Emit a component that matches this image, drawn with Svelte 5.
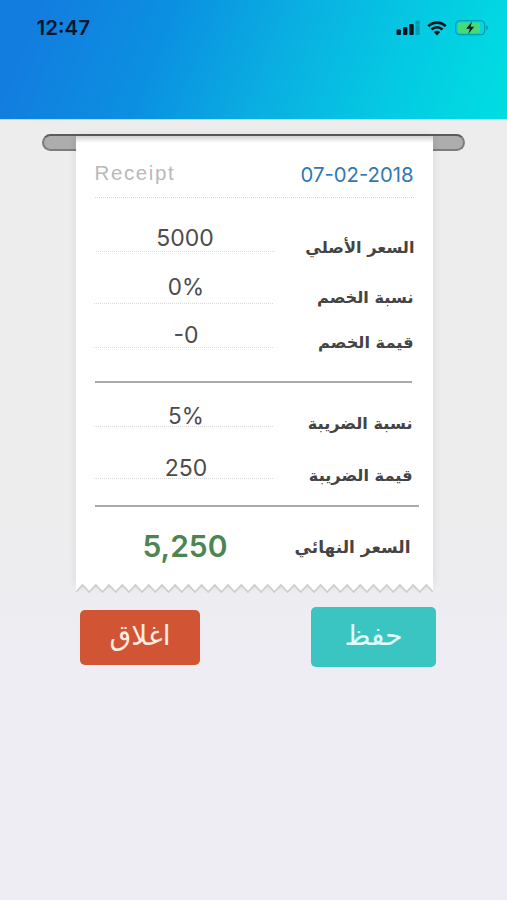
<script lang="ts">
	const time = '12:47';
	const date = '07-02-2018';

	const priceRows = [
		{ id: 'price', label: 'السعر الأصلي', value: '5000' },
		{ id: 'discount-rate', label: 'نسبة الخصم', value: '0%' },
		{ id: 'discount', label: 'قيمة الخصم', value: '-0' }
	];

	const taxRows = [
		{ id: 'tax-rate', label: 'نسبة الضريبة', value: '5%' },
		{ id: 'tax', label: 'قيمة الضريبة', value: '250' }
	];

	// torn edge of the paper
	const teeth = 27;
	const toothWidth = 357 / teeth;
	let edge = 'M0 8';
	for (let i = 0; i < teeth; i++) {
		edge += ` L${(i + 0.5) * toothWidth} 1 L${(i + 1) * toothWidth} 8`;
	}
</script>

{#snippet row(item: { id: string; label: string; value: string })}
	<div class="row {item.id}">
		<div class="value">{item.value}</div>
		<div class="label" dir="rtl">{item.label}</div>
	</div>
{/snippet}

<div class="screen">
	<header>
		<span class="time">{time}</span>
		<div class="status">
			<svg class="signal" viewBox="0 0 24 16">
				<rect x="0.5" y="9.5" width="4.4" height="5.5" rx="1" />
				<rect x="7" y="7" width="4.4" height="8" rx="1" />
				<rect x="13.3" y="4" width="4.4" height="11" rx="1" />
				<rect x="19.5" y="0.5" width="4.2" height="14.5" rx="1" opacity="0.25" />
			</svg>
			<svg class="wifi" viewBox="0 0 20 15">
				<path d="M1.3 5.2 C6.2 0.4 13.8 0.4 18.7 5.2" />
				<path d="M4.5 8.5 C7.6 5.5 12.4 5.5 15.5 8.5" />
				<path class="dot" d="M6.8 11.1 Q10 8.6 13.2 11.1 L10 14.4Z" />
			</svg>
			<svg class="battery" viewBox="0 0 34 16">
				<rect x="0.7" y="0.7" width="29" height="14" rx="4" fill="none" stroke="#0b93a6" stroke-width="1.1" />
				<rect x="2.6" y="2.5" width="22.5" height="10.4" rx="2.4" fill="#46da78" />
				<path d="M31.3 5 Q34.5 7.7 31.3 10.4Z" fill="#0b93a6" />
				<path d="M17 1.6 L11.2 8.7 H14.8 L13.3 14 L19.2 6.8 H15.6Z" fill="#071d24" />
			</svg>
		</div>
	</header>

	<main>
		<div class="slot">
			<section class="paper">
				<div class="top">
					<span class="title">Receipt</span>
					<span class="date">{date}</span>
				</div>

				{#each priceRows as item}
					{@render row(item)}
				{/each}
				<hr />
				{#each taxRows as item}
					{@render row(item)}
				{/each}
				<hr class="wide" />

				<div class="total">
					<div class="amount">5,250</div>
					<div class="label" dir="rtl">السعر النهائي</div>
				</div>

				<svg class="edge" viewBox="0 0 357 11">
					<path class="fill" d="{edge} V0 H0Z" />
					<path class="tear" d={edge} />
				</svg>
			</section>
		</div>

		<div class="actions">
			<button class="close">اغلاق</button>
			<button class="save">حفظ</button>
		</div>
	</main>
</div>

<style>
	:global(body) {
		margin: 0;
		background: #eeedf2;
	}

	.screen {
		min-height: 900px;
		overflow: hidden;
		background: linear-gradient(180deg, #ededed 120px, #ededef 560px, #eeedf3 640px);
		font-family: Inter, 'DejaVu Sans', sans-serif;
	}

	header {
		box-sizing: border-box;
		height: 120px;
		padding: 18px 19px 0 36.5px;
		display: flex;
		justify-content: space-between;
		align-items: flex-start;
		background: linear-gradient(112deg, #137cdf 6%, #0b90e1 32%, #0aaee1 54%, #05c8e3 76%, #00dbe2 96%);
		border-bottom: 1px solid #a8e3f7;
	}

	.time {
		font-size: 20.5px;
		line-height: 20px;
		font-weight: 600;
		color: #07182d;
	}

	.status {
		display: flex;
		align-items: center;
		padding-top: 2px;
	}

	.signal {
		width: 24px;
		height: 16px;
		margin-right: 7px;
		fill: #06171f;
	}

	.wifi {
		width: 20px;
		height: 15px;
		margin-right: 8px;
		fill: none;
		stroke: #06171f;
		stroke-width: 2.7;
	}

	.wifi .dot {
		fill: #06171f;
		stroke: none;
	}

	.battery {
		width: 34px;
		height: 16px;
		margin-right: -1px;
	}

	main {
		padding: 14px 42px 0;
	}

	.slot {
		box-sizing: border-box;
		height: 17px;
		padding: 0 31.5px;
		border: 2px solid #7d7d7d;
		border-top-color: #5c5c5c;
		border-radius: 9px;
		background: #adadad;
	}

	.paper {
		box-sizing: border-box;
		width: 357px;
		height: 449px;
		padding: 0 19px;
		background: linear-gradient(180deg, #d2d2d2 0, #fff 7px);
		box-shadow: 0 0 9px rgba(0, 0, 0, 0.09);
		color: #4c4c4c;
	}

	.top {
		box-sizing: border-box;
		height: 62px;
		padding-top: 26px;
		display: flex;
		justify-content: space-between;
		border-bottom: 1px dotted #d5d5d5;
	}

	.title {
		font: 20.5px/22px 'Liberation Sans', sans-serif;
		letter-spacing: 1.6px;
		color: #b9b9b9;
	}

	.date {
		font-size: 20.3px;
		line-height: 25px;
		color: #3178b1;
	}

	.row {
		display: flex;
		justify-content: space-between;
		align-items: flex-end;
	}

	.value {
		box-sizing: border-box;
		width: 179px;
		margin-left: -1px;
		border-bottom: 1px dotted #d9d9d9;
		text-align: center;
		font-size: 23px;
		line-height: 20px;
		padding-left: 6px;
	}

	.label {
		font-family: 'DejaVu Sans', sans-serif;
		font-weight: 700;
		font-size: 16.2px;
		line-height: 20px;
		margin-bottom: -6px;
		white-space: nowrap;
		color: #444;
	}

	.price {
		height: 54px;
	}

	.price .value {
		margin-left: 1px;
		padding: 0 0 3px;
	}

	.price .label {
		margin-right: -1px;
	}

	.discount-rate {
		height: 52px;
	}

	.discount-rate .value {
		padding-bottom: 6px;
	}

	.discount-rate .label {
		margin-bottom: -4px;
	}

	.discount {
		height: 44px;
	}

	.discount .value {
		padding-bottom: 2px;
	}

	.discount .label {
		margin-bottom: -5px;
	}

	hr {
		width: 317px;
		height: 2px;
		margin: 33px 0 0;
		border: 0;
		background: #aaa;
	}

	hr.wide {
		width: 324px;
		margin-top: 26px;
	}

	.tax-rate,
	.tax {
		padding-right: 1px;
	}

	.tax-rate {
		height: 44px;
	}

	.tax {
		height: 52px;
	}

	.tax-rate .value,
	.discount-rate .value {
		font-size: 22.5px;
	}

	.tax-rate .label,
	.tax .label {
		margin-bottom: -7px;
	}

	.total {
		display: flex;
		justify-content: space-between;
		align-items: center;
		height: 78px;
		padding-right: 3px;
	}

	.amount {
		width: 181px;
		text-align: center;
		font-size: 30px;
		font-weight: 600;
		color: #4d8550;
	}

	.total .label {
		margin: 2px 0 0;
		font-size: 17px;
	}

	.edge {
		display: block;
		width: 357px;
		height: 11px;
		margin: -1px -19px 0;
	}

	.edge .fill {
		fill: #fff;
	}

	.edge .tear {
		fill: none;
		stroke: #cecece;
		stroke-width: 1.8;
	}

	.actions {
		display: flex;
		justify-content: space-between;
		align-items: center;
		margin: 456px 29px 0 38px;
	}

	button {
		border: 0;
		border-radius: 5px;
		padding: 0 0 2px;
		font: 28px/1 'DejaVu Sans', sans-serif;
		color: #fff;
	}

	.close {
		width: 120px;
		height: 55px;
		background: #d15535;
		color: #ffede2;
	}

	.save {
		width: 125px;
		height: 60px;
		background: #3ac5c3;
		color: #e2ffff;
	}
</style>
